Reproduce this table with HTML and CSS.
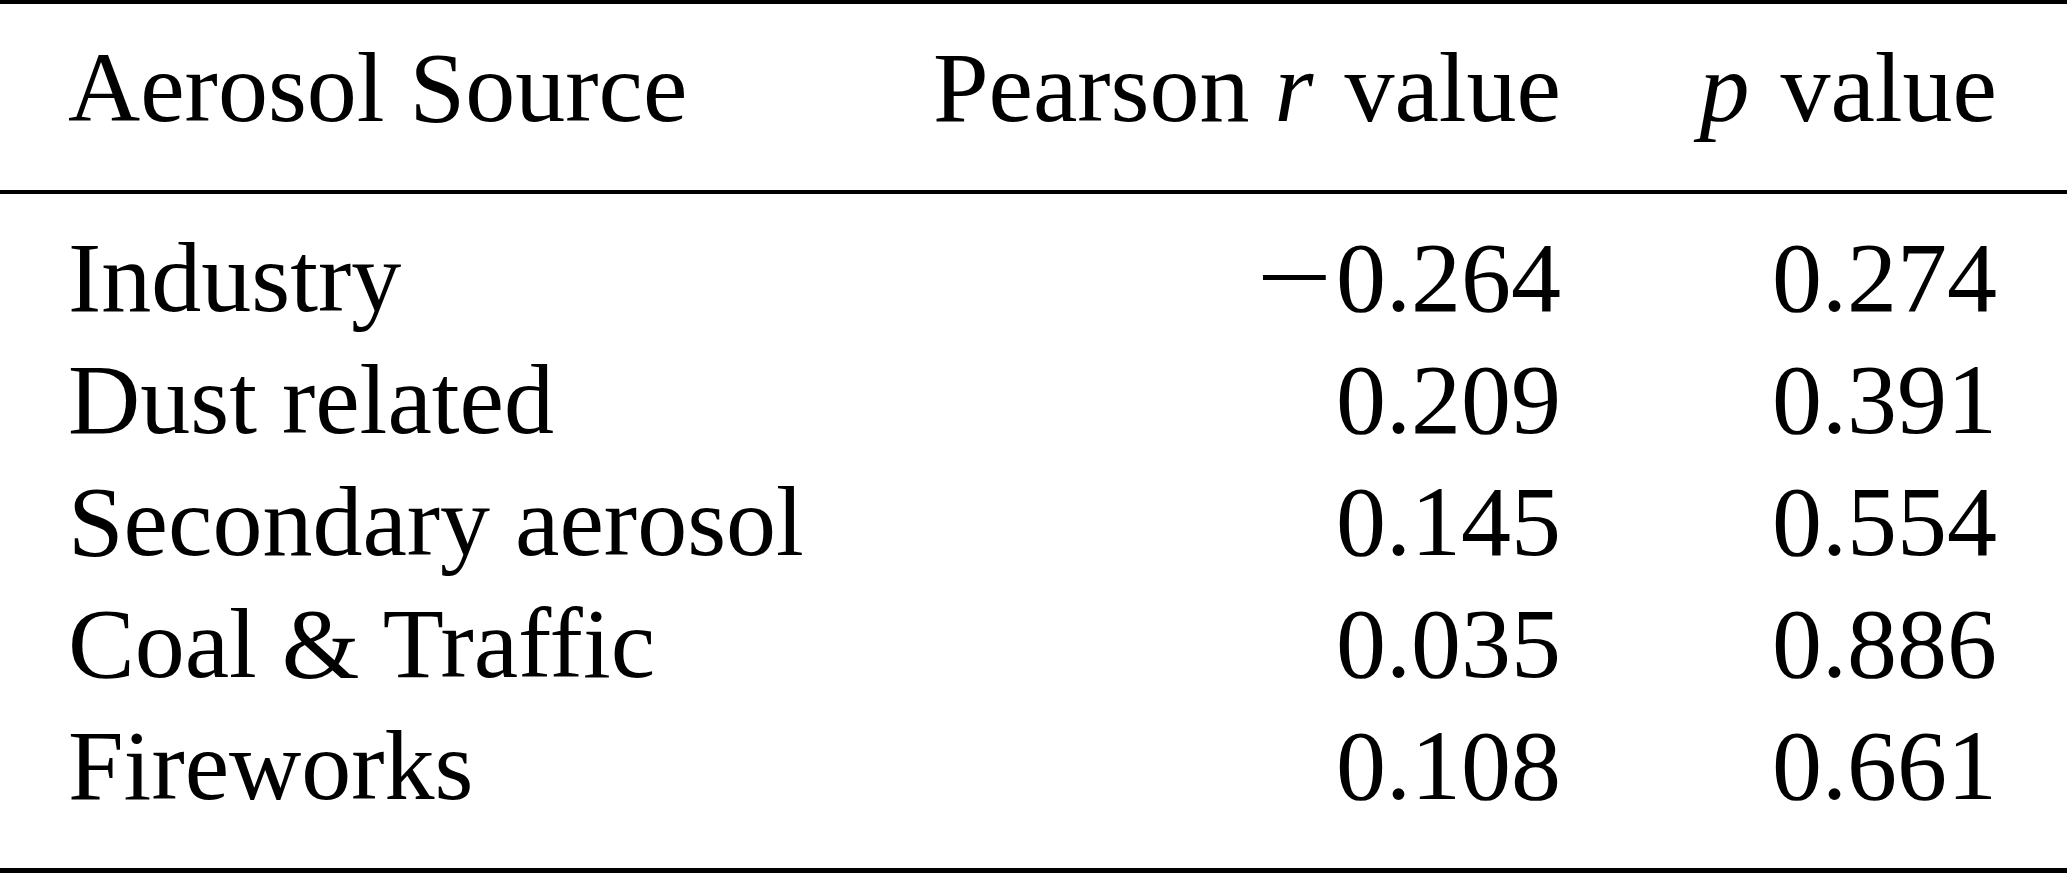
FILE: index.html
```html
<!DOCTYPE html>
<html lang="en">
<head>
<meta charset="utf-8">
<title>Aerosol Source correlation</title>
<link rel="stylesheet" href="styles.css">
</head>
<body>
<div class="table">
  <div class="head">
    <div class="row">
      <div class="cell left">Aerosol Source</div>
      <div class="cell right">Pearson <i class="var">r</i> value</div>
      <div class="cell right"><i class="var">p</i> value</div>
    </div>
  </div>
  <div class="body">
    <div class="row">
      <div class="cell left">Industry</div>
      <div class="cell right"><span class="minus">&minus;</span>0.264</div>
      <div class="cell right">0.274</div>
    </div>
    <div class="row">
      <div class="cell left">Dust related</div>
      <div class="cell right">0.209</div>
      <div class="cell right">0.391</div>
    </div>
    <div class="row">
      <div class="cell left">Secondary aerosol</div>
      <div class="cell right">0.145</div>
      <div class="cell right">0.554</div>
    </div>
    <div class="row">
      <div class="cell left">Coal &amp; Traffic</div>
      <div class="cell right">0.035</div>
      <div class="cell right">0.886</div>
    </div>
    <div class="row">
      <div class="cell left">Fireworks</div>
      <div class="cell right">0.108</div>
      <div class="cell right">0.661</div>
    </div>
  </div>
</div>
</body>
</html>
```

FILE: styles.css
```css
html, body {
  margin: 0;
  padding: 0;
  background: #ffffff;
}

body {
  font-family: "Liberation Serif", "Times New Roman", serif;
  font-size: 100px;
  color: #000000;
}

.table {
  width: 2067px;
  border-top: 4px solid #000000;
  border-bottom: 5px solid #000000;
}

.head {
  padding: 23px 0 41px;
  border-bottom: 4px solid #000000;
}

.body {
  padding: 23px 0 41px;
}

.row {
  display: grid;
  grid-template-columns: 1fr 720px 436px;
  padding: 0 70px 0 68px;
  line-height: 122px;
  white-space: nowrap;
}

.left {
  text-align: left;
}

.right {
  text-align: right;
}

.var {
  font-style: italic;
  margin-right: 6px;
}

.minus {
  display: inline-block;
  margin-right: 4px;
  transform: scaleX(1.35);
  transform-origin: right center;
}
```
